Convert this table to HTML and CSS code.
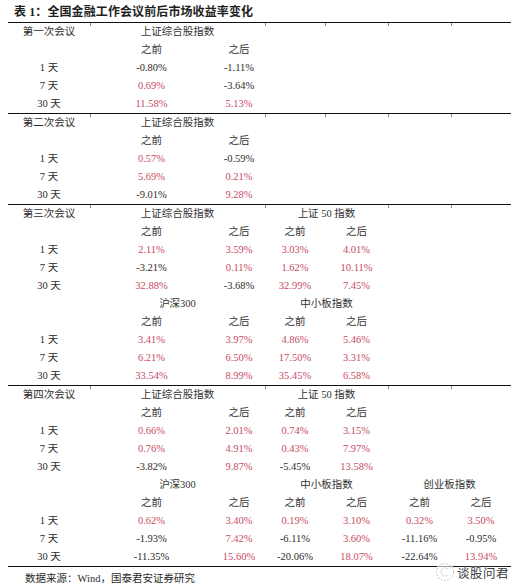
FILE: index.html
```html
<!DOCTYPE html>
<html lang="zh">
<head>
<meta charset="utf-8">
<title>表1</title>
<link rel="stylesheet" href="styles.css">
</head>
<body>
<div class="page">
  <div class="title">表 1：全国金融工作会议前后市场收益率变化</div>
  <table class="data">
    <colgroup>
      <col class="c0"><col class="c1"><col class="c2"><col class="c3"><col class="c4"><col class="c5"><col class="c6">
    </colgroup>
    <tbody>
      <tr class="sec first"><td>第一次会议</td><td colspan="2" class="hd">上证综合股指数</td><td></td><td></td><td></td><td></td></tr>
      <tr><td></td><td class="hd">之前</td><td class="hd">之后</td><td></td><td></td><td></td><td></td></tr>
      <tr><td>1 天</td><td>-0.80%</td><td>-1.11%</td><td></td><td></td><td></td><td></td></tr>
      <tr><td>7 天</td><td class="r">0.69%</td><td>-3.64%</td><td></td><td></td><td></td><td></td></tr>
      <tr><td>30 天</td><td class="r">11.58%</td><td class="r">5.13%</td><td></td><td></td><td></td><td></td></tr>

      <tr class="sec"><td>第二次会议</td><td colspan="2" class="hd">上证综合股指数</td><td></td><td></td><td></td><td></td></tr>
      <tr><td></td><td class="hd">之前</td><td class="hd">之后</td><td></td><td></td><td></td><td></td></tr>
      <tr><td>1 天</td><td class="r">0.57%</td><td>-0.59%</td><td></td><td></td><td></td><td></td></tr>
      <tr><td>7 天</td><td class="r">5.69%</td><td class="r">0.21%</td><td></td><td></td><td></td><td></td></tr>
      <tr><td>30 天</td><td>-9.01%</td><td class="r">9.28%</td><td></td><td></td><td></td><td></td></tr>

      <tr class="sec"><td>第三次会议</td><td colspan="2" class="hd">上证综合股指数</td><td colspan="2" class="hd">上证 50 指数</td><td></td><td></td></tr>
      <tr><td></td><td class="hd">之前</td><td class="hd">之后</td><td class="hd">之前</td><td class="hd">之后</td><td></td><td></td></tr>
      <tr><td>1 天</td><td class="r">2.11%</td><td class="r">3.59%</td><td class="r">3.03%</td><td class="r">4.01%</td><td></td><td></td></tr>
      <tr><td>7 天</td><td>-3.21%</td><td class="r">0.11%</td><td class="r">1.62%</td><td class="r">10.11%</td><td></td><td></td></tr>
      <tr><td>30 天</td><td class="r">32.88%</td><td>-3.68%</td><td class="r">32.99%</td><td class="r">7.45%</td><td></td><td></td></tr>
      <tr><td></td><td colspan="2" class="hd">沪深300</td><td colspan="2" class="hd">中小板指数</td><td></td><td></td></tr>
      <tr><td></td><td class="hd">之前</td><td class="hd">之后</td><td class="hd">之前</td><td class="hd">之后</td><td></td><td></td></tr>
      <tr><td>1 天</td><td class="r">3.41%</td><td class="r">3.97%</td><td class="r">4.86%</td><td class="r">5.46%</td><td></td><td></td></tr>
      <tr><td>7 天</td><td class="r">6.21%</td><td class="r">6.50%</td><td class="r">17.50%</td><td class="r">3.31%</td><td></td><td></td></tr>
      <tr><td>30 天</td><td class="r">33.54%</td><td class="r">8.99%</td><td class="r">35.45%</td><td class="r">6.58%</td><td></td><td></td></tr>

      <tr class="sec"><td>第四次会议</td><td colspan="2" class="hd">上证综合股指数</td><td colspan="2" class="hd">上证 50 指数</td><td></td><td></td></tr>
      <tr><td></td><td class="hd">之前</td><td class="hd">之后</td><td class="hd">之前</td><td class="hd">之后</td><td></td><td></td></tr>
      <tr><td>1 天</td><td class="r">0.66%</td><td class="r">2.01%</td><td class="r">0.74%</td><td class="r">3.15%</td><td></td><td></td></tr>
      <tr><td>7 天</td><td class="r">0.76%</td><td class="r">4.91%</td><td class="r">0.43%</td><td class="r">7.97%</td><td></td><td></td></tr>
      <tr><td>30 天</td><td>-3.82%</td><td class="r">9.87%</td><td>-5.45%</td><td class="r">13.58%</td><td></td><td></td></tr>
      <tr><td></td><td colspan="2" class="hd">沪深300</td><td colspan="2" class="hd">中小板指数</td><td colspan="2" class="hd">创业板指数</td></tr>
      <tr><td></td><td class="hd">之前</td><td class="hd">之后</td><td class="hd">之前</td><td class="hd">之后</td><td class="hd">之前</td><td class="hd">之后</td></tr>
      <tr><td>1 天</td><td class="r">0.62%</td><td class="r">3.40%</td><td class="r">0.19%</td><td class="r">3.10%</td><td class="r">0.32%</td><td class="r">3.50%</td></tr>
      <tr><td>7 天</td><td>-1.93%</td><td class="r">7.42%</td><td>-6.11%</td><td class="r">3.60%</td><td>-11.16%</td><td>-0.95%</td></tr>
      <tr class="last"><td>30 天</td><td>-11.35%</td><td class="r">15.60%</td><td>-20.06%</td><td class="r">18.07%</td><td>-22.64%</td><td class="r">13.94%</td></tr>
    </tbody>
  </table>
  <div class="source">数据来源：Wind，国泰君安证券研究</div>
  <div class="watermark">
    <svg class="wm-icon" width="20" height="20" viewBox="0 0 20 20">
      <circle cx="10" cy="10" r="8.5" fill="none" stroke="#b8b8b8" stroke-width="1" stroke-dasharray="1.6 1.6"/>
      <path d="M13 7.2 A4 4 0 1 0 13 12.8" fill="none" stroke="#b0b0b0" stroke-width="1" stroke-dasharray="1.4 1.2"/>
    </svg>
    <span class="wm-text">谈股问君</span>
  </div>
</div>
</body>
</html>
```

FILE: styles.css
```css
html, body {
  margin: 0;
  padding: 0;
  background: #ffffff;
}

.page {
  position: relative;
  width: 526px;
  height: 585px;
  font-family: "Liberation Serif", "Noto Sans CJK SC", serif;
  color: #2b2b2b;
}

.title {
  padding: 2px 0 0 14px;
  height: 20px;
  line-height: 20px;
  font-size: 12px;
  font-weight: bold;
  color: #1e1e1e;
  letter-spacing: 0.1px;
}

.data {
  margin-left: 8px;
  width: 503px;
  table-layout: fixed;
  border-collapse: separate;
  border-spacing: 0;
  font-size: 10.5px;
}

.c0 { width: 82px; }
.c1 { width: 123px; }
.c2 { width: 52px; }
.c3 { width: 60px; }
.c4 { width: 63px; }
.c5 { width: 63px; }
.c6 { width: 60px; }

.data td {
  height: 18px;
  padding: 0;
  line-height: 18px;
  text-align: center;
  white-space: nowrap;
  vertical-align: middle;
}

.data .hd {
  color: #333333;
}

.data .r {
  color: #c84a63;
}

.data tr.sec td {
  border-top: 1px solid #111111;
  background: linear-gradient(#888888, #888888) no-repeat left top / 1px 3px;
}

.data tr.sec td:first-child {
  background: none;
}

.data tr.last td {
  border-bottom: 1px solid #111111;
  line-height: 12px;
}

.source {
  padding: 3px 0 0 25px;
  line-height: 18px;
  font-size: 10.5px;
  color: #2b2b2b;
}

.watermark {
  position: absolute;
  left: 435px;
  top: 562px;
  display: flex;
  align-items: center;
  gap: 2px;
}

.wm-icon {
  display: block;
  background: rgba(255, 255, 255, 0.6);
  border-radius: 50%;
}

.wm-text {
  font-family: "Noto Sans CJK SC", sans-serif;
  font-size: 12.5px;
  line-height: normal;
  color: #3a3a3a;
  letter-spacing: 0.5px;
  text-shadow: 0 0 2px #fff, 0 0 2px #fff;
}
```
